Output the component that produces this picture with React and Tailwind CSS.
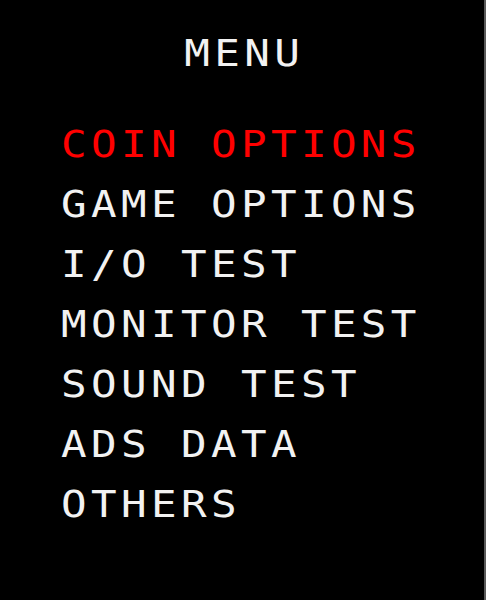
import React, { useState } from 'react';

const menuItems = [
    'COIN OPTIONS',
    'GAME OPTIONS',
    'I/O TEST',
    'MONITOR TEST',
    'SOUND TEST',
    'ADS DATA',
    'OTHERS',
];

function App() {
    const [selected] = useState(0);

    return (
        <section className="w-[486px] h-[600px] bg-black border-r-2 border-[#5a5a5a] font-['DejaVu_Sans_Mono',monospace] text-[37px] leading-[60px] tracking-[3.8px] text-[#f2f2f2] overflow-hidden">
            <h1 className="pt-6 text-center pl-[4px] scale-x-[1.15]">MENU</h1>
            <ul className="mt-[31px] ml-[61px] origin-left scale-x-[1.15]">
                {menuItems.map((item, i) => (
                    <li key={item} className={`whitespace-pre ${i === selected ? 'text-[#ff0000]' : ''}`}>
                        {item}
                    </li>
                ))}
            </ul>
        </section>
    );
}

export default App;
